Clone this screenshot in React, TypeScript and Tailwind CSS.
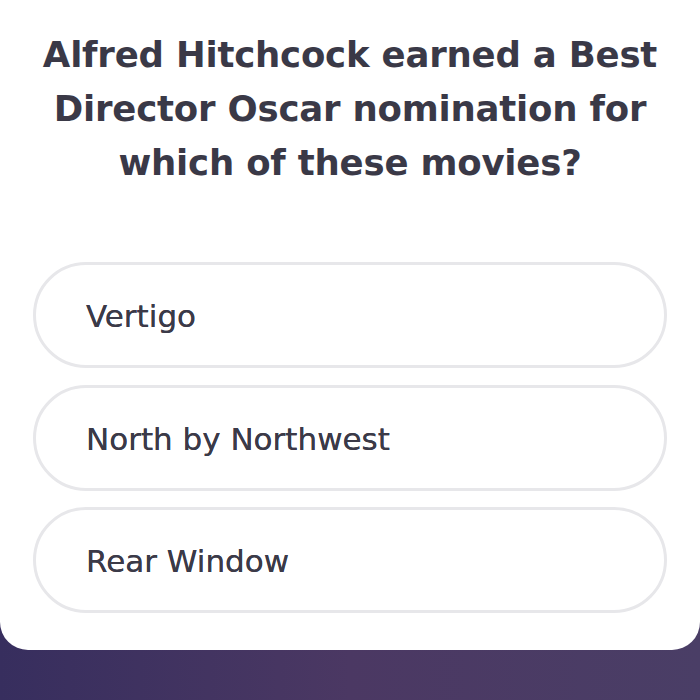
import React from "react";

const answers = ["Vertigo", "North by Northwest", "Rear Window"];

export default function App() {
  return (
    <div className="h-[700px] w-[700px] overflow-hidden bg-gradient-to-r from-[#372e5e] via-[#4b3863] to-[#4a3e66] font-['DejaVu_Sans',sans-serif]">
      {/* question card */}
      <div className="rounded-b-[28px] bg-white pt-[28px] pb-[37px]">
        <h1 className="whitespace-nowrap text-center text-[35.5px] leading-[54px] font-bold tracking-[-0.2px] text-[#3a3947]">
          Alfred Hitchcock earned a Best
          <br />
          Director Oscar nomination for
          <br />
          which of these movies?
        </h1>

        <div className="mt-[72px] flex flex-col gap-[16.5px] px-[33px]">
          {answers.map((a) => (
            <button
              key={a}
              className="h-[106px] w-full rounded-full border-[3px] border-[#e7e7ea] bg-white pl-[50px] pt-[3px] text-left text-[31px] text-[#3b3a48] [text-shadow:0_0_0.4px_#3b3a48]"
            >
              {a}
            </button>
          ))}
        </div>
      </div>
    </div>
  );
}
